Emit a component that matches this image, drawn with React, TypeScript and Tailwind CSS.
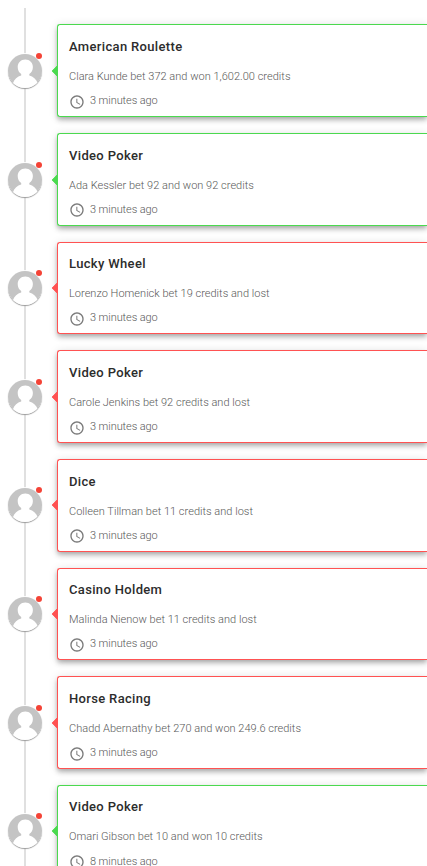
import { MdAccessTime } from "react-icons/md";
import { clsx } from "clsx";

interface Bet {
    game: string;
    text: string;
    time: string;
    positive: boolean;
}

const bets: Bet[] = [
    { game: "American Roulette", text: "Clara Kunde bet 372 and won 1,602.00 credits", time: "3 minutes ago", positive: true },
    { game: "Video Poker", text: "Ada Kessler bet 92 and won 92 credits", time: "3 minutes ago", positive: true },
    { game: "Lucky Wheel", text: "Lorenzo Homenick bet 19 credits and lost", time: "3 minutes ago", positive: false },
    { game: "Video Poker", text: "Carole Jenkins bet 92 credits and lost", time: "3 minutes ago", positive: false },
    { game: "Dice", text: "Colleen Tillman bet 11 credits and lost", time: "3 minutes ago", positive: false },
    { game: "Casino Holdem", text: "Malinda Nienow bet 11 credits and lost", time: "3 minutes ago", positive: false },
    { game: "Horse Racing", text: "Chadd Abernathy bet 270 and won 249.6 credits", time: "3 minutes ago", positive: false },
    { game: "Video Poker", text: "Omari Gibson bet 10 and won 10 credits", time: "8 minutes ago", positive: true },
];

function Avatar() {
    return (
        <div className="relative mt-[0.6px] size-[34px] shrink-0 rounded-full bg-white shadow-[0_1px_1px_rgba(0,0,0,0.4),0_0_0_1px_rgba(255,255,255,0.9)]">
            <svg viewBox="0 0 34 34" className="size-full overflow-hidden rounded-full">
                <rect width="34" height="34" fill="#c4c4c4" />
                <path
                    d="M17.3 5.6c4.5 0 7.6 3.2 7.6 7.4 0 3.2-1.4 5.6-3.6 7v1.4c3.8.9 6.9 3.6 8.6 8.1L26 34H8l-3.2-4.5c1.5-4.5 4.6-7.2 8.4-8.1V20c-2.2-1.4-3.5-3.8-3.5-7 0-4.2 3.1-7.4 7.6-7.4z"
                    fill="#fff"
                />
            </svg>
            <span className="absolute -top-px right-0 size-1.5 rounded-full bg-[#f44336]" />
        </div>
    );
}

function TimelineItem({ bet }: { bet: Bet }) {
    return (
        <li className="flex h-[92.65px] items-center gap-[15px] pl-2">
            <Avatar />
            <div
                className={clsx(
                    "relative h-full flex-1 rounded-[3px] rounded-r-none border border-r-0 bg-white pl-[11px]",
                    "shadow-[0_2px_4px_-1px_rgba(0,0,0,0.2),0_4px_5px_0_rgba(0,0,0,0.14),0_1px_10px_0_rgba(0,0,0,0.12)]",
                    bet.positive ? "border-[#4bd94f]" : "border-[#ff5252]"
                )}
            >
                <span
                    className={clsx(
                        "absolute top-1/2 -left-[5px] mt-[0.3px] size-2 -translate-y-1/2 rotate-45 rounded-[1px] [clip-path:polygon(0_0,0_100%,100%_100%)]",
                        bet.positive ? "bg-[#4bd94f]" : "bg-[#ff5252]"
                    )}
                />
                <h4 className="pt-[11.66px] text-[13px] leading-5 font-[465] tracking-[0.34px] text-[#2c2c2c]">{bet.game}</h4>
                <p className="pt-3 text-[11px] leading-4 font-light tracking-[0.02px] text-[#585858]">{bet.text}</p>
                <div className="flex items-start gap-[5px] pt-[8.26px] text-[11px] leading-4 font-light text-[#585858]">
                    <MdAccessTime className="mt-[0.6px] size-4 text-[#7a7a7a]" />
                    <span className="tracking-[-0.08px]">{bet.time}</span>
                </div>
            </div>
        </li>
    );
}

export default function App() {
    return (
        <main className="relative h-[866px] overflow-hidden bg-white pt-[24.3px] font-[Roboto,sans-serif]">
            {/* Rail behind the avatars */}
            <div className="absolute top-2 bottom-0 left-6 w-0.5 bg-[#e0e0e0]" />
            <ul className="relative flex flex-col gap-4">
                {bets.map((bet, i) => (
                    <TimelineItem key={i} bet={bet} />
                ))}
            </ul>
        </main>
    );
}
